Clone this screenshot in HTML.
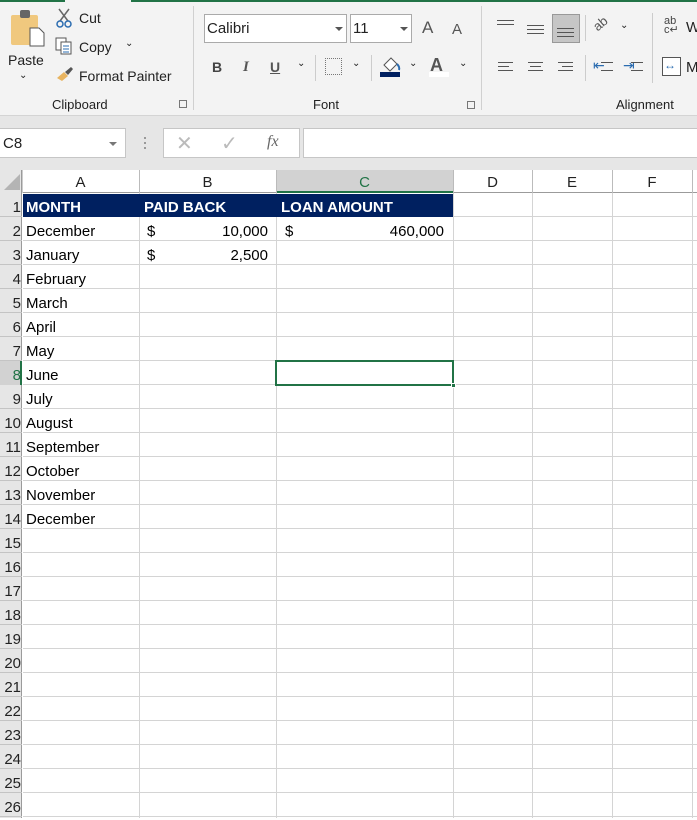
<!DOCTYPE html><html><head><meta charset="utf-8"><style>
*{margin:0;padding:0;box-sizing:border-box}
body{width:697px;height:818px;overflow:hidden;background:#fff;font-family:"Liberation Sans",sans-serif;position:relative;color:#000}
.a{position:absolute}
.t{font-size:14px;color:#222;white-space:nowrap}
.cell{position:absolute;font-size:15px;white-space:nowrap;line-height:24px;margin-top:2px}
.rn{position:absolute;left:0;width:21px;text-align:right;font-size:15px;line-height:24px;overflow:hidden;direction:rtl;color:#222;margin-top:2px}
.ch{position:absolute;top:171px;height:23px;line-height:23px;text-align:center;font-size:15px;color:#222}
.al{position:absolute;height:1px;background:#555}
</style></head><body>
<div class="a" style="left:0;top:0;width:697px;height:115px;background:#f3f3f3"></div>
<div class="a" style="left:0;top:0;width:65px;height:2px;background:#217346"></div>
<div class="a" style="left:131px;top:0;width:566px;height:2px;background:#217346"></div>
<div class="a" style="left:0;top:115px;width:697px;height:1px;background:#d4d4d4"></div>
<div class="a" style="left:0;top:116px;width:697px;height:54px;background:#e6e6e6"></div>
<div class="a" style="left:11px;top:15px;width:27px;height:30px;background:#f0c87e;border-radius:2px"></div>
<div class="a" style="left:20px;top:10px;width:10px;height:8px;background:#666;border-radius:2px"></div>
<svg class="a" style="left:29px;top:27px" width="16" height="20"><path d="M1 1H10L15 6V19H1Z" fill="#fff" stroke="#555"/></svg>
<div class="a t" style="left:8px;top:52px">Paste</div>
<div class="a t" style="left:19px;top:70px;font-size:10px">⌄</div>
<svg class="a" style="left:55px;top:8px" width="18" height="20"><path d="M4 1L13 13M14 1L5 13" stroke="#666" stroke-width="1.5"/><circle cx="5" cy="16" r="3" fill="none" stroke="#2b6cb0" stroke-width="1.5"/><circle cx="13" cy="16" r="3" fill="none" stroke="#2b6cb0" stroke-width="1.5"/></svg>
<div class="a t" style="left:79px;top:10px">Cut</div>
<svg class="a" style="left:55px;top:37px" width="18" height="18"><rect x="1" y="1" width="10" height="12" fill="#fff" stroke="#555"/><rect x="6" y="5" width="10" height="12" fill="#fff" stroke="#555"/><path d="M8 9H14M8 12H14M8 15H14" stroke="#2b6cb0"/></svg>
<div class="a t" style="left:79px;top:39px">Copy</div>
<div class="a t" style="left:125px;top:38px;font-size:10px">⌄</div>
<svg class="a" style="left:56px;top:66px" width="18" height="16"><path d="M1 12L8 6L12 10L6 15Z" fill="#e8b460"/><path d="M9 6L15 1L17 3L12 9Z" fill="#555"/></svg>
<div class="a t" style="left:79px;top:68px">Format Painter</div>
<div class="a t" style="left:52px;top:97px;font-size:13px">Clipboard</div>
<div class="a" style="left:179px;top:100px;width:8px;height:8px;border:1px solid #777"></div>
<div class="a" style="left:193px;top:6px;width:1px;height:104px;background:#d0d0d0"></div>
<div class="a" style="left:204px;top:14px;width:143px;height:29px;background:#fff;border:1px solid #aaa"></div>
<div class="a t" style="left:207px;top:20px;font-size:15px">Calibri</div>
<div class="a" style="left:335px;top:27px;border:4px solid transparent;border-top:4px solid #555"></div>
<div class="a" style="left:350px;top:14px;width:62px;height:29px;background:#fff;border:1px solid #aaa"></div>
<div class="a t" style="left:353px;top:20px;font-size:15px">11</div>
<div class="a" style="left:400px;top:27px;border:4px solid transparent;border-top:4px solid #555"></div>
<div class="a t" style="left:422px;top:18px;font-size:17px;color:#555">A</div>
<div class="a t" style="left:452px;top:21px;font-size:15px;color:#555">A</div>
<div class="a t" style="left:212px;top:59px;font-weight:bold;color:#444">B</div>
<div class="a t" style="left:243px;top:59px;font-style:italic;font-family:'Liberation Serif',serif;font-weight:bold;color:#555;font-size:15px">I</div>
<div class="a t" style="left:270px;top:59px;text-decoration:underline;font-weight:bold;color:#555">U</div>
<div class="a t" style="left:297px;top:58px;font-size:10px">⌄</div>
<div class="a" style="left:315px;top:55px;width:1px;height:26px;background:#ccc"></div>
<div class="a" style="left:325px;top:58px;width:17px;height:17px;border:1px dotted #777"></div>
<div class="a t" style="left:352px;top:58px;font-size:10px">⌄</div>
<div class="a" style="left:371px;top:55px;width:1px;height:26px;background:#ccc"></div>
<svg class="a" style="left:380px;top:55px" width="22" height="22"><path d="M4 10L11 3L17 9L10 16Z" fill="#fff" stroke="#555"/><path d="M17 9Q20 12 19 15" stroke="#2b6cb0" stroke-width="2" fill="none"/></svg>
<div class="a" style="left:380px;top:72px;width:20px;height:5px;background:#002060"></div>
<div class="a t" style="left:409px;top:58px;font-size:10px">⌄</div>
<div class="a t" style="left:430px;top:55px;font-size:18px;font-weight:bold;color:#555">A</div>
<div class="a" style="left:429px;top:72px;width:20px;height:5px;background:#fff"></div>
<div class="a t" style="left:459px;top:58px;font-size:10px">⌄</div>
<div class="a t" style="left:313px;top:97px;font-size:13px">Font</div>
<div class="a" style="left:467px;top:101px;width:8px;height:8px;border:1px solid #777"></div>
<div class="a" style="left:481px;top:6px;width:1px;height:104px;background:#d0d0d0"></div>
<div class="al" style="left:497px;top:20px;width:17px"></div><div class="al" style="left:497px;top:24px;width:17px"></div>
<div class="al" style="left:527px;top:25px;width:17px"></div><div class="al" style="left:527px;top:29px;width:17px"></div><div class="al" style="left:527px;top:33px;width:17px"></div>
<div class="a" style="left:552px;top:14px;width:28px;height:29px;background:#c6c6c6;border:1px solid #999"></div>
<div class="al" style="left:557px;top:28px;width:17px"></div><div class="al" style="left:557px;top:32px;width:17px"></div><div class="al" style="left:557px;top:36px;width:17px"></div>
<div class="a" style="left:585px;top:15px;width:1px;height:26px;background:#ccc"></div>
<div class="a t" style="left:593px;top:16px;font-size:13px;color:#555;transform:rotate(-40deg)">ab</div>
<div class="a t" style="left:620px;top:20px;font-size:10px">⌄</div>
<div class="a" style="left:652px;top:13px;width:1px;height:70px;background:#ccc"></div>
<div class="a t" style="left:664px;top:17px;font-size:11px;color:#444;line-height:9px">ab<br>c↵</div>
<div class="a t" style="left:686px;top:19px;font-size:15px">W</div>
<div class="al" style="left:498px;top:62px;width:15px"></div><div class="al" style="left:498px;top:66px;width:11px"></div><div class="al" style="left:498px;top:70px;width:15px"></div>
<div class="al" style="left:528px;top:62px;width:15px"></div><div class="al" style="left:530px;top:66px;width:11px"></div><div class="al" style="left:528px;top:70px;width:15px"></div>
<div class="al" style="left:558px;top:62px;width:15px"></div><div class="al" style="left:562px;top:66px;width:11px"></div><div class="al" style="left:558px;top:70px;width:15px"></div>
<div class="a" style="left:585px;top:55px;width:1px;height:26px;background:#ccc"></div>
<div class="a t" style="left:593px;top:57px;font-size:14px;color:#2b6cb0">⇤</div><div class="al" style="left:601px;top:62px;width:12px"></div><div class="al" style="left:601px;top:70px;width:12px"></div>
<div class="a t" style="left:623px;top:57px;font-size:14px;color:#2b6cb0">⇥</div><div class="al" style="left:631px;top:62px;width:12px"></div><div class="al" style="left:631px;top:70px;width:12px"></div>
<div class="a" style="left:662px;top:57px;width:19px;height:19px;border:1px solid #555;background:#fff"></div>
<div class="a t" style="left:664px;top:58px;font-size:12px;color:#2b6cb0">↔</div>
<div class="a t" style="left:686px;top:59px;font-size:15px">M</div>
<div class="a t" style="left:616px;top:97px;font-size:13px">Alignment</div>
<div class="a" style="left:0;top:128px;width:126px;height:30px;background:#fff;border:1px solid #c6c6c6;border-left:none"></div>
<div class="a t" style="left:3px;top:135px;font-size:15px">C8</div>
<div class="a" style="left:109px;top:142px;border:4px solid transparent;border-top:4px solid #777"></div>
<div class="a" style="left:144px;top:137px;width:2px;height:2px;background:#999;box-shadow:0 5px #999,0 10px #999"></div>
<div class="a" style="left:163px;top:128px;width:137px;height:30px;background:#fff;border:1px solid #c6c6c6"></div>
<div class="a t" style="left:176px;top:131px;font-size:20px;color:#bbb">✕</div>
<div class="a t" style="left:221px;top:131px;font-size:20px;color:#bbb">✓</div>
<div class="a t" style="left:267px;top:133px;font-size:16px;font-style:italic;font-family:'Liberation Serif',serif;color:#666">fx</div>
<div class="a" style="left:303px;top:128px;width:394px;height:30px;background:#fff;border:1px solid #c6c6c6;border-right:none"></div>
<div class="a" style="left:0;top:170px;width:22px;height:648px;background:#e6e6e6;border-right:1px solid #9b9b9b"></div>
<svg class="a" style="left:3px;top:173px" width="18" height="18"><path d="M17 1V17H1Z" fill="#b4b4b4"/></svg>
<div class="a" style="left:22px;top:192px;width:675px;height:1px;background:#9b9b9b"></div>
<div class="a" style="left:276px;top:170px;width:177px;height:23px;background:#d2d2d2;border-bottom:2px solid #217346"></div>
<div class="a" style="left:22px;top:170px;width:1px;height:23px;background:#ccc"></div>
<div class="a" style="left:139px;top:170px;width:1px;height:23px;background:#bbb"></div>
<div class="a" style="left:276px;top:170px;width:1px;height:23px;background:#bbb"></div>
<div class="a" style="left:453px;top:170px;width:1px;height:23px;background:#bbb"></div>
<div class="a" style="left:532px;top:170px;width:1px;height:23px;background:#bbb"></div>
<div class="a" style="left:612px;top:170px;width:1px;height:23px;background:#bbb"></div>
<div class="a" style="left:692px;top:170px;width:1px;height:23px;background:#bbb"></div>
<div class="ch" style="left:22px;width:117px">A</div>
<div class="ch" style="left:139px;width:137px">B</div>
<div class="ch" style="left:276px;width:177px;color:#217346">C</div>
<div class="ch" style="left:453px;width:79px">D</div>
<div class="ch" style="left:532px;width:80px">E</div>
<div class="ch" style="left:612px;width:80px">F</div>
<div class="a" style="left:23px;top:193px;width:674px;height:625px;background:repeating-linear-gradient(to bottom,transparent 0,transparent 23px,#d4d4d4 23px,#d4d4d4 24px)"></div>
<div class="a" style="left:0;top:193px;width:22px;height:625px;background:repeating-linear-gradient(to bottom,transparent 0,transparent 23px,#c4c4c4 23px,#c4c4c4 24px)"></div>
<div class="a" style="left:139px;top:193px;width:1px;height:625px;background:#d4d4d4"></div>
<div class="a" style="left:276px;top:193px;width:1px;height:625px;background:#d4d4d4"></div>
<div class="a" style="left:453px;top:193px;width:1px;height:625px;background:#d4d4d4"></div>
<div class="a" style="left:532px;top:193px;width:1px;height:625px;background:#d4d4d4"></div>
<div class="a" style="left:612px;top:193px;width:1px;height:625px;background:#d4d4d4"></div>
<div class="a" style="left:692px;top:193px;width:1px;height:625px;background:#d4d4d4"></div>
<div class="a" style="left:23px;top:194px;width:430px;height:23px;background:#002060"></div>
<div class="a" style="left:0;top:361px;width:22px;height:24px;background:#d2d2d2;border-right:2px solid #217346"></div>
<div class="a" style="left:275px;top:360px;width:179px;height:26px;border:2px solid #217346"></div>
<div class="a" style="left:451px;top:383px;width:5px;height:5px;background:#217346;border:1px solid #fff"></div>
<div class="rn" style="top:194px">1</div><div class="rn" style="top:218px">2</div><div class="rn" style="top:242px">3</div><div class="rn" style="top:266px">4</div><div class="rn" style="top:290px">5</div><div class="rn" style="top:314px">6</div><div class="rn" style="top:338px">7</div><div class="rn" style="top:362px;color:#217346">8</div><div class="rn" style="top:386px">9</div><div class="rn" style="top:410px">10</div><div class="rn" style="top:434px">11</div><div class="rn" style="top:458px">12</div><div class="rn" style="top:482px">13</div><div class="rn" style="top:506px">14</div><div class="rn" style="top:530px">15</div><div class="rn" style="top:554px">16</div><div class="rn" style="top:578px">17</div><div class="rn" style="top:602px">18</div><div class="rn" style="top:626px">19</div><div class="rn" style="top:650px">20</div><div class="rn" style="top:674px">21</div><div class="rn" style="top:698px">22</div><div class="rn" style="top:722px">23</div><div class="rn" style="top:746px">24</div><div class="rn" style="top:770px">25</div><div class="rn" style="top:794px">26</div>
<div class="cell" style="left:26px;top:194px;color:#fff;font-weight:bold">MONTH</div>
<div class="cell" style="left:144px;top:194px;color:#fff;font-weight:bold">PAID BACK</div>
<div class="cell" style="left:281px;top:194px;color:#fff;font-weight:bold">LOAN AMOUNT</div>
<div class="cell" style="left:26px;top:218px">December</div>
<div class="cell" style="left:147px;top:218px">$</div><div class="cell" style="left:140px;width:128px;text-align:right;top:218px">10,000</div>
<div class="cell" style="left:285px;top:218px">$</div><div class="cell" style="left:277px;width:167px;text-align:right;top:218px">460,000</div>
<div class="cell" style="left:26px;top:242px">January</div>
<div class="cell" style="left:147px;top:242px">$</div><div class="cell" style="left:140px;width:128px;text-align:right;top:242px">2,500</div>
<div class="cell" style="left:26px;top:266px">February</div>
<div class="cell" style="left:26px;top:290px">March</div>
<div class="cell" style="left:26px;top:314px">April</div>
<div class="cell" style="left:26px;top:338px">May</div>
<div class="cell" style="left:26px;top:362px">June</div>
<div class="cell" style="left:26px;top:386px">July</div>
<div class="cell" style="left:26px;top:410px">August</div>
<div class="cell" style="left:26px;top:434px">September</div>
<div class="cell" style="left:26px;top:458px">October</div>
<div class="cell" style="left:26px;top:482px">November</div>
<div class="cell" style="left:26px;top:506px">December</div>
</body></html>
